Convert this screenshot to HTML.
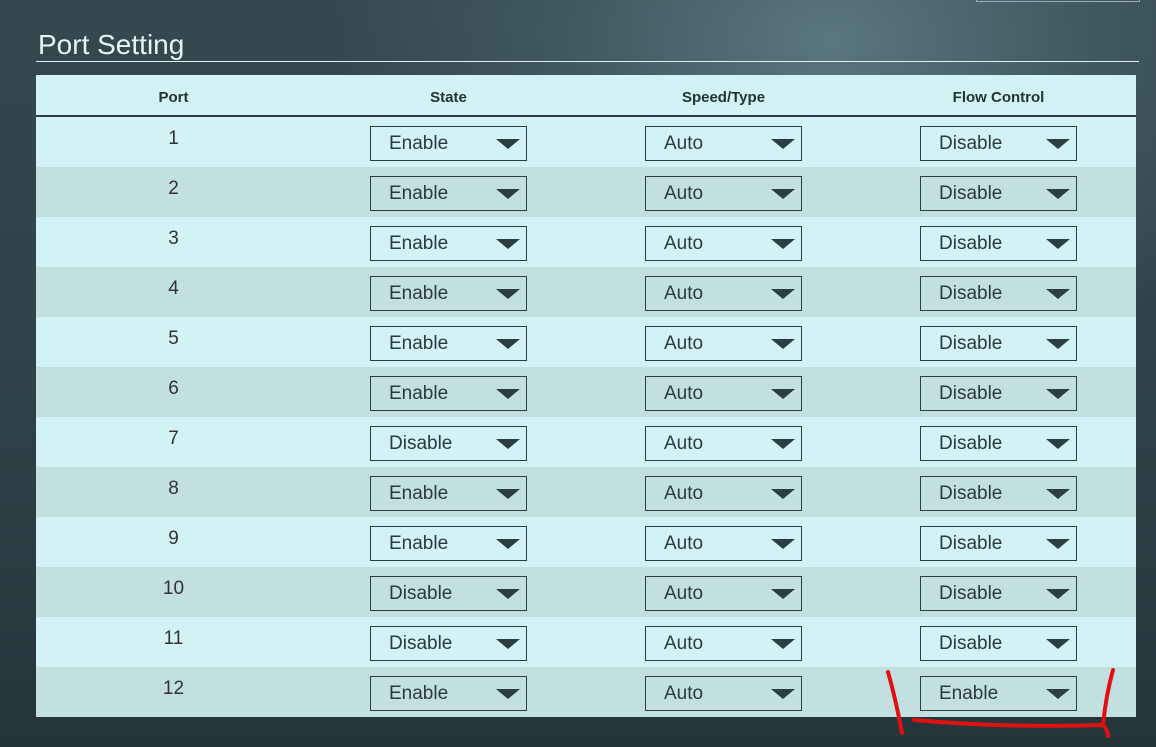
<!DOCTYPE html>
<html><head><style>
body{margin:0;width:1156px;height:747px;overflow:hidden;position:relative;font-family:"Liberation Sans",sans-serif;
background:radial-gradient(ellipse 500px 350px at 830px 40px,#5a777d 0%,#405a60 50%,transparent 100%),linear-gradient(180deg,#34494e 0%,#2e4348 50%,#243539 100%);}
.topbox{position:absolute;left:976px;top:-2px;width:162px;height:3px;border:1px solid #9ab;border-top:none}
h1{position:absolute;left:38px;top:29px;margin:0;font-weight:normal;font-size:28px;color:#e6f4f4}
.line{position:absolute;left:36px;top:61px;width:1103px;height:1px;background:#dfeeee}
table{position:absolute;left:36px;top:75px;width:1100px;border-collapse:collapse;}
th{height:41px;font-size:15px;color:#233;font-weight:bold;background:#d3f2f4;border-bottom:2px solid #2b3e42;padding:5px 0 0;box-sizing:border-box}
td{height:50px;padding:0;text-align:center;vertical-align:top;font-size:19px;color:#333}
tr.l td{background:#d3f2f4}tr.d td{background:#c3e0e1}
td.p{padding-top:11px;height:39px}
.s{display:inline-block;box-sizing:border-box;width:157px;height:35px;border:1px solid #2b3e42;margin-top:9px;text-align:left;padding:6px 0 0 18px;font-size:19px;color:#2a3a3e;position:relative}
.s:after{content:"";position:absolute;right:6px;top:12px;border-left:12px solid transparent;border-right:12px solid transparent;border-top:10px solid #2b3e42}
</style></head><body>
<div class="topbox"></div>
<h1>Port Setting</h1><div class="line"></div>
<table>
<tr><th style="width:275px">Port</th><th style="width:275px">State</th><th style="width:275px">Speed/Type</th><th>Flow Control</th></tr>
<tr class="l"><td class="p">1</td><td><span class="s">Enable</span></td><td><span class="s">Auto</span></td><td><span class="s">Disable</span></td></tr>
<tr class="d"><td class="p">2</td><td><span class="s">Enable</span></td><td><span class="s">Auto</span></td><td><span class="s">Disable</span></td></tr>
<tr class="l"><td class="p">3</td><td><span class="s">Enable</span></td><td><span class="s">Auto</span></td><td><span class="s">Disable</span></td></tr>
<tr class="d"><td class="p">4</td><td><span class="s">Enable</span></td><td><span class="s">Auto</span></td><td><span class="s">Disable</span></td></tr>
<tr class="l"><td class="p">5</td><td><span class="s">Enable</span></td><td><span class="s">Auto</span></td><td><span class="s">Disable</span></td></tr>
<tr class="d"><td class="p">6</td><td><span class="s">Enable</span></td><td><span class="s">Auto</span></td><td><span class="s">Disable</span></td></tr>
<tr class="l"><td class="p">7</td><td><span class="s">Disable</span></td><td><span class="s">Auto</span></td><td><span class="s">Disable</span></td></tr>
<tr class="d"><td class="p">8</td><td><span class="s">Enable</span></td><td><span class="s">Auto</span></td><td><span class="s">Disable</span></td></tr>
<tr class="l"><td class="p">9</td><td><span class="s">Enable</span></td><td><span class="s">Auto</span></td><td><span class="s">Disable</span></td></tr>
<tr class="d"><td class="p">10</td><td><span class="s">Disable</span></td><td><span class="s">Auto</span></td><td><span class="s">Disable</span></td></tr>
<tr class="l"><td class="p">11</td><td><span class="s">Disable</span></td><td><span class="s">Auto</span></td><td><span class="s">Disable</span></td></tr>
<tr class="d"><td class="p">12</td><td><span class="s">Enable</span></td><td><span class="s">Auto</span></td><td><span class="s">Enable</span></td></tr>
</table>
<svg style="position:absolute;left:0;top:0" width="1156" height="747"><path d="M888 672 Q896 700 902 733 M914 720 Q1000 728 1103 725 Q1108 730 1108 736 M1103 725 Q1106 695 1113 670" fill="none" stroke="#e01010" stroke-width="4" stroke-linecap="round"/></svg>
</body></html>
